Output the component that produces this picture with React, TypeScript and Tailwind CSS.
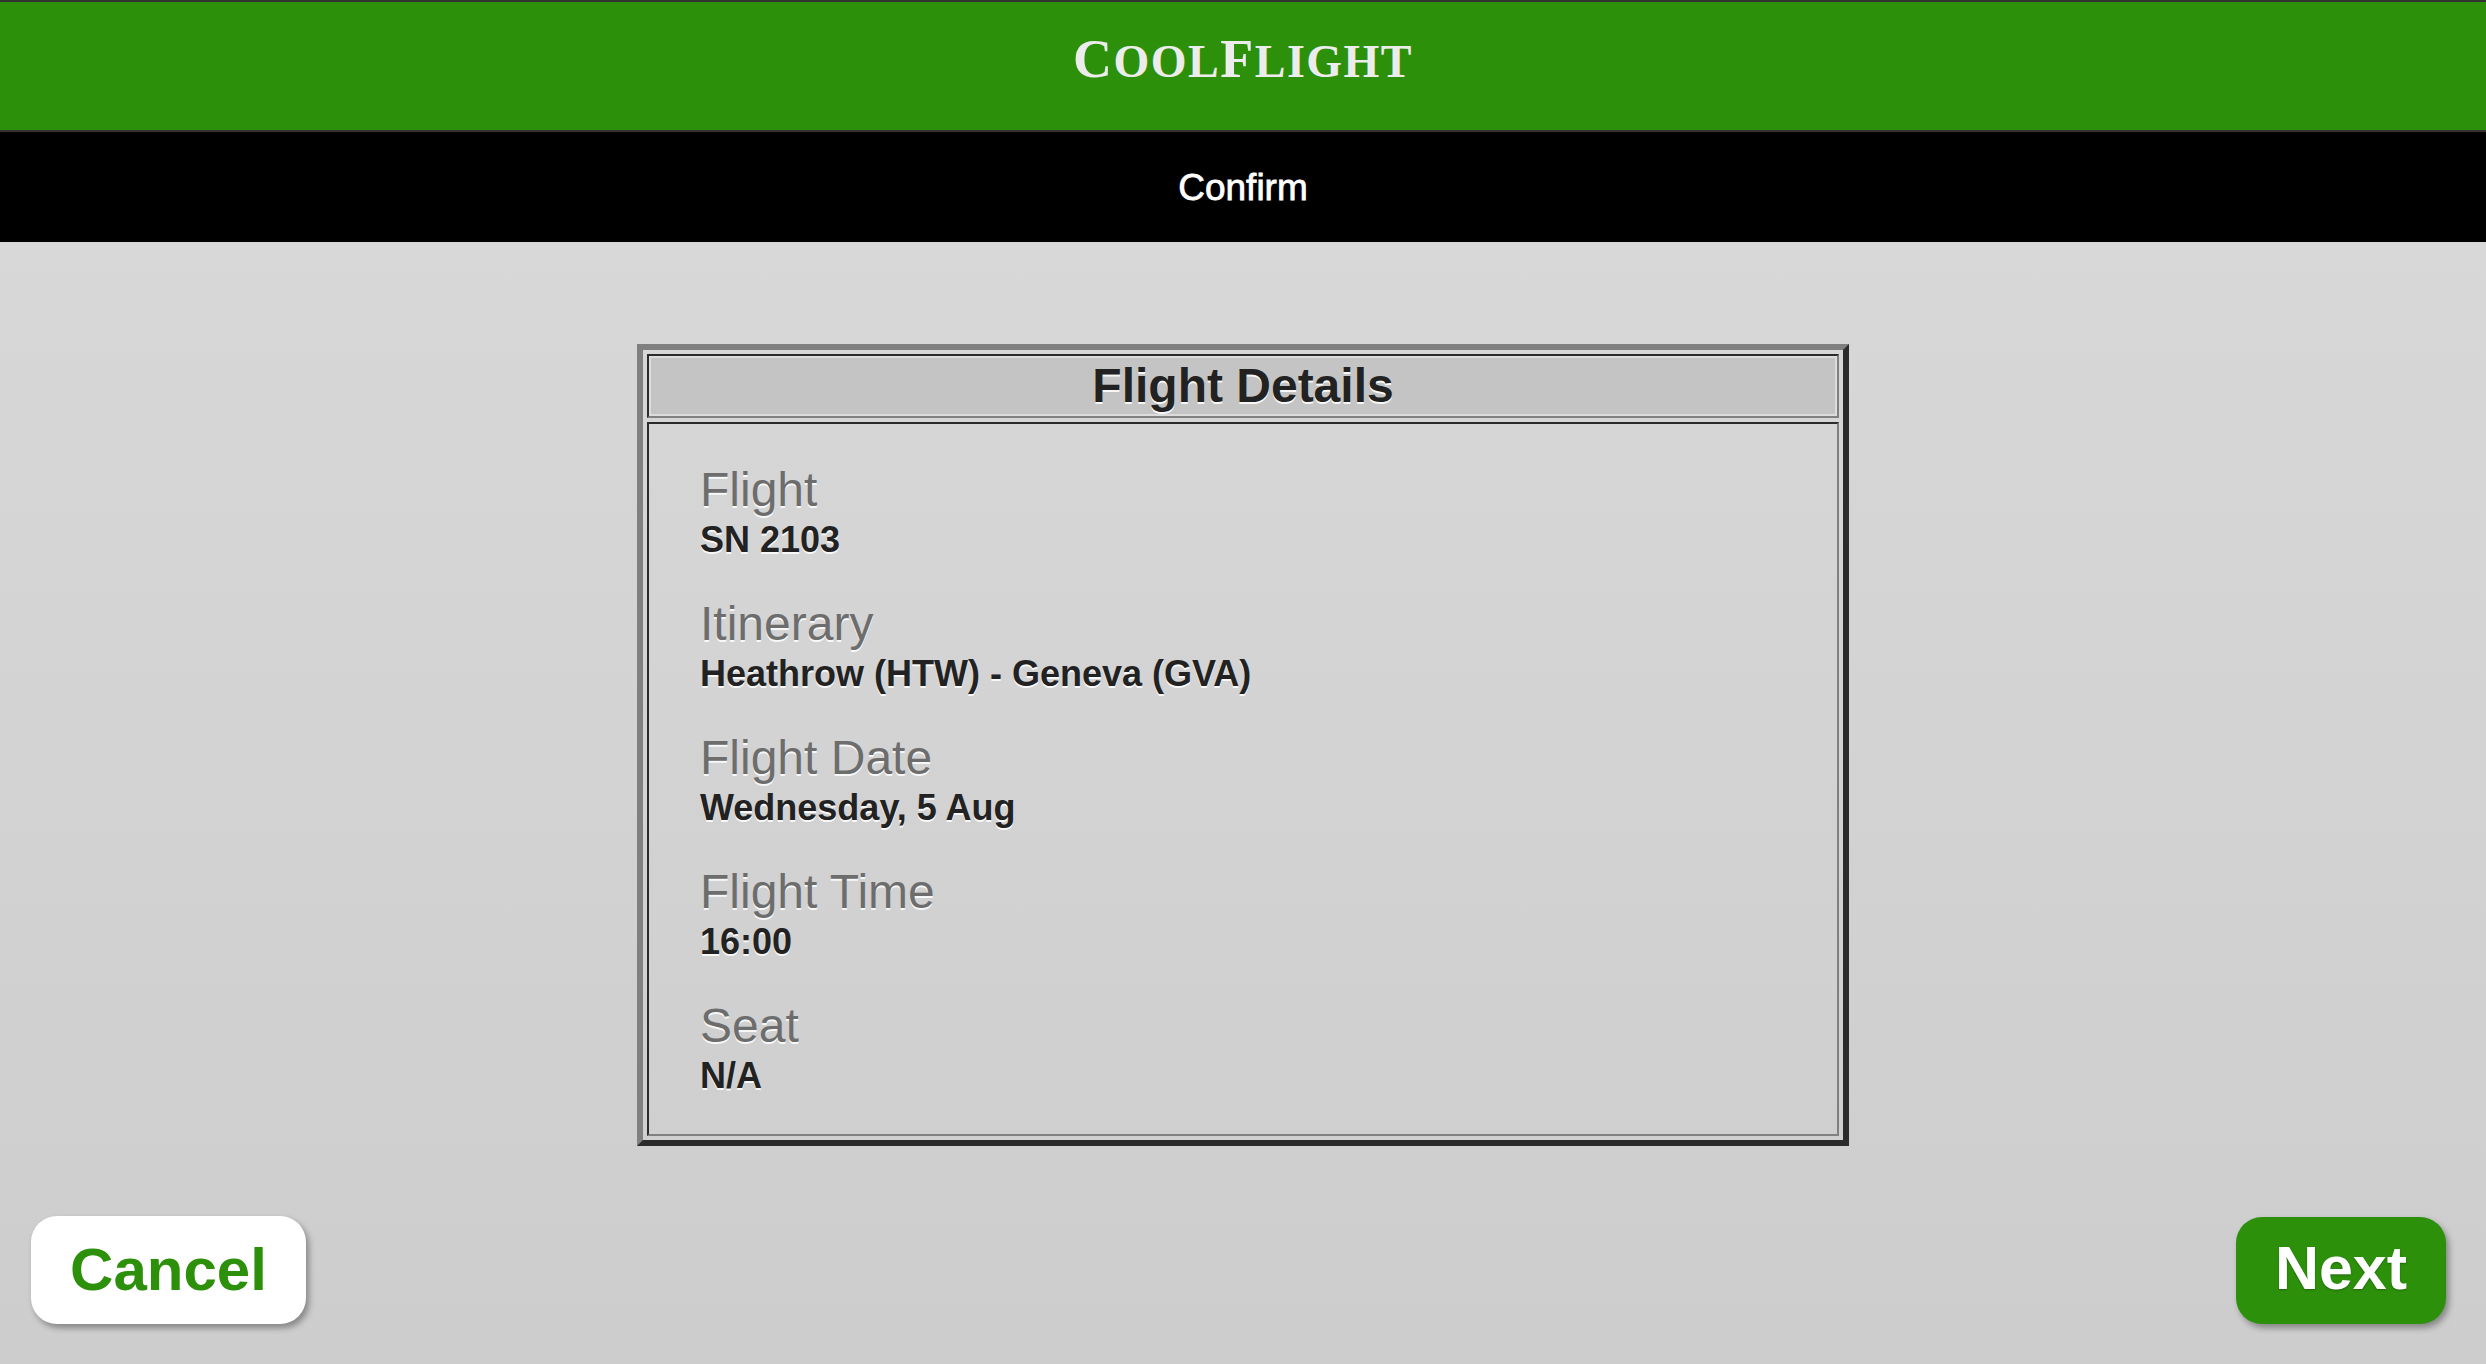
import React from "react";

const items = [
  { label: "Flight", value: "SN 2103" },
  { label: "Itinerary", value: "Heathrow (HTW) - Geneva (GVA)" },
  { label: "Flight Date", value: "Wednesday, 5 Aug" },
  { label: "Flight Time", value: "16:00" },
  { label: "Seat", value: "N/A" },
];

export default function App() {
  return (
    <div
      className="h-screen w-full flex flex-col bg-gradient-to-b from-[#dadada] to-[#cdcdcd] overflow-hidden"
      style={{ fontFamily: '"Liberation Sans", Arial, Helvetica, sans-serif' }}
    >
      {/* Brand bar */}
      <header className="h-[132px] shrink-0 border-t-2 border-b-2 border-[#333333] bg-[#2c900b] flex items-center justify-center">
        <div
          className="text-[#ececec] font-bold uppercase tracking-[1.5px] leading-none pb-[14px]"
          style={{ fontFamily: '"Liberation Serif", "Times New Roman", serif' }}
        >
          <span className="text-[54px]">C</span>
          <span className="text-[46px]">ool</span>
          <span className="text-[54px]">F</span>
          <span className="text-[46px]">light</span>
        </div>
      </header>

      {/* Title bar */}
      <div className="h-[110px] shrink-0 bg-black flex items-center justify-center">
        <span className="text-white text-[37px] leading-none [-webkit-text-stroke:0.8px_white]">Confirm</span>
      </div>

      {/* Content */}
      <main className="flex-1 pt-[102px]">
        <div className="w-[1212px] mx-auto border-[6px] border-t-[#808080] border-l-[#808080] border-b-[#2b2b2b] border-r-[#2b2b2b] p-[4px] flex flex-col gap-[4px]">
          <div className="h-[64px] border-2 border-t-[#2b2b2b] border-l-[#2b2b2b] border-b-[#808080] border-r-[#808080]">
            <div className="h-full border-2 border-[#dcdcdc] bg-[#c4c4c4] flex items-center justify-center">
              <span className="text-[48px] leading-[56px] font-bold text-[#222222] [text-shadow:0_2px_0_rgba(255,255,255,0.9)]">
                Flight Details
              </span>
            </div>
          </div>
          <div className="border-2 border-t-[#2b2b2b] border-l-[#2b2b2b] border-b-[#808080] border-r-[#808080] pt-[38px] pb-[36px] pl-[51px] flex flex-col gap-[34px]">
            {items.map((it) => (
              <div key={it.label} className="flex flex-col">
                <span className="text-[48px] leading-[56px] text-[#6d6d6d] [text-shadow:0_2px_0_rgba(255,255,255,0.85)]">
                  {it.label}
                </span>
                <span className="text-[36px] leading-[44px] font-bold text-[#222222] [text-shadow:0_2px_0_rgba(255,255,255,0.85)]">
                  {it.value}
                </span>
              </div>
            ))}
          </div>
        </div>
      </main>

      {/* Footer buttons */}
      <footer className="shrink-0 flex items-end justify-between pl-[31px] pr-[40px] pb-[40px]">
        <button className="h-[108px] w-[275px] rounded-[26px] bg-white text-[#2c900b] text-[60px] font-bold leading-none flex items-center justify-center shadow-[3px_4px_6px_rgba(0,0,0,0.35)]">
          Cancel
        </button>
        <button className="h-[107px] w-[210px] rounded-[26px] bg-[#2c900b] text-white text-[61px] font-bold leading-none flex items-center justify-center pb-[4px] shadow-[3px_4px_6px_rgba(0,0,0,0.35)] [text-shadow:0_1px_2px_rgba(0,0,0,0.3)]">
          Next
        </button>
      </footer>
    </div>
  );
}
